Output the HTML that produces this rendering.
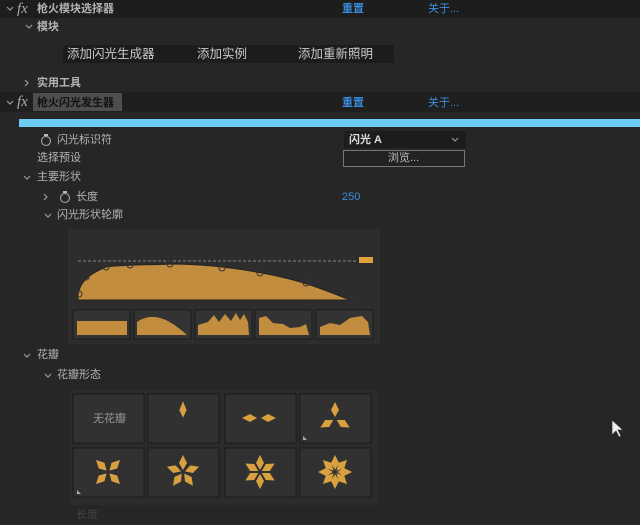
<!DOCTYPE html>
<html><head><meta charset="utf-8"><style>
*{margin:0;padding:0;box-sizing:border-box}
body{width:640px;height:525px;background:#262626;position:relative;overflow:hidden;font-family:"Liberation Sans","Noto Sans CJK SC",sans-serif;font-size:11px;color:#b4b4b4}
.a{position:absolute;white-space:nowrap;line-height:14px}
.b{font-weight:bold}
.blue{color:#3b8fe0}
svg{position:absolute;left:0;top:0}
</style></head><body>
<div class="a" style="left:0;top:0;width:640px;height:18px;background:#1d1d1d"></div>
<div class="a" style="left:0;top:92px;width:640px;height:20px;background:#1f1f1f"></div>
<div class="a" style="left:33px;top:93px;width:89px;height:18px;background:#4e4e4e"></div>
<div class="a" style="left:63px;top:45px;width:331px;height:18px;background:#1c1c1c"></div>
<div class="a" style="left:19px;top:119px;width:621px;height:8px;background:#6ccbf2"></div>
<div class="a" style="left:344px;top:131px;width:122px;height:17px;background:#1c1c1c"></div>
<div class="a" style="left:343px;top:150px;width:122px;height:17px;border:1px solid #777;background:#222"></div>
<div class="a" style="left:68px;top:229px;width:312px;height:115px;background:#2d2d2d"></div>
<div class="a" style="left:70px;top:390px;width:308px;height:115px;background:#2b2b2b"></div>

<svg width="640" height="525">
 <g fill="none" stroke="#999" stroke-width="1.2">
  <path d="M7,7l3,3l3,-3"/><path d="M26,25l3,3l3,-3"/><path d="M25,80l3,3l-3,3"/>
  <path d="M7,101l3,3l3,-3"/><path d="M24,176l3,3l3,-3"/><path d="M44,194l3,3l-3,3"/>
  <path d="M45,214l3,3l3,-3"/><path d="M24,354l3,3l3,-3"/><path d="M45,374l3,3l3,-3"/>
  <path d="M452,138l3,3l3,-3"/>
  <circle cx="46" cy="141" r="4.5"/><circle cx="65" cy="198" r="4.5"/>
 </g>
 <g fill="#bbb"><rect x="44" y="134" width="4" height="2"/><rect x="63" y="191" width="4" height="2"/></g>
 <line x1="78" y1="261" x2="356" y2="261" stroke="#888" stroke-dasharray="3,2"/>
 <rect x="359" y="257" width="14" height="6" fill="#e0a040"/>
 <path d="M78,300 L78,294 C80,285 84,276 106,267 C130,264 160,265 170,264 C200,264 230,267 262,273 C300,280 320,288 350,300 Z" fill="#c28d3e" stroke="#222" stroke-width="1"/>
 <g fill="none" stroke="#333"><circle cx="79" cy="294" r="3"/><circle cx="86" cy="277" r="3"/><circle cx="106" cy="267" r="3"/><circle cx="130" cy="265" r="3"/><circle cx="170" cy="264" r="3"/><circle cx="222" cy="268" r="3"/><circle cx="260" cy="273" r="3"/><circle cx="306" cy="283" r="3"/><circle cx="350" cy="300" r="3"/></g>
 <g fill="#333" stroke="#1b1b1b"><rect x="73" y="310" width="57" height="29"/><rect x="134" y="310" width="57" height="29"/><rect x="195" y="310" width="57" height="29"/><rect x="255" y="310" width="57" height="29"/><rect x="316" y="310" width="57" height="29"/></g>
 <g fill="#c28d3e">
  <rect x="77" y="321" width="50" height="14"/>
  <path d="M137,335 L137,322 C150,313 165,315 187,335Z"/>
  <path d="M198,335 L198,325 L208,322 L214,315 L219,322 L225,314 L231,321 L236,313 L240,320 L244,314 L248,322 L249,335Z"/>
  <path d="M259,335 L259,318 L266,316 L273,323 L283,324 L290,328 L300,327 L306,324 L309,335Z"/>
  <path d="M320,335 L320,327 L330,323 L340,325 L350,318 L362,316 L368,322 L370,335Z"/>
 </g>
 <g fill="#313131" stroke="#1a1a1a">
  <rect x="73" y="394" width="71" height="49"/><rect x="148" y="394" width="71" height="49"/><rect x="225" y="394" width="71" height="49"/><rect x="300" y="394" width="71" height="49"/>
  <rect x="73" y="448" width="71" height="49"/><rect x="148" y="448" width="71" height="49"/><rect x="225" y="448" width="71" height="49"/><rect x="300" y="448" width="71" height="49"/>
 </g>
 <defs><path id="p" d="M0,-2 L4,-9 L0,-17 L-4,-9Z" fill="#d9a040"/></defs>
 <use href="#p" transform="translate(183,420) scale(0.9,1.1)"/>
 <use href="#p" transform="translate(259,418) rotate(-90)"/>
 <use href="#p" transform="translate(259,418) rotate(90)"/>
 <g transform="translate(335,419)"><use href="#p"/><use href="#p" transform="rotate(120)"/><use href="#p" transform="rotate(240)"/></g>
 <g transform="translate(108,472)"><use href="#p" transform="rotate(45)"/><use href="#p" transform="rotate(135)"/><use href="#p" transform="rotate(225)"/><use href="#p" transform="rotate(315)"/></g>
 <g transform="translate(183,472)"><use href="#p"/><use href="#p" transform="rotate(72)"/><use href="#p" transform="rotate(144)"/><use href="#p" transform="rotate(216)"/><use href="#p" transform="rotate(288)"/></g>
 <g transform="translate(260,472)"><use href="#p"/><use href="#p" transform="rotate(60)"/><use href="#p" transform="rotate(120)"/><use href="#p" transform="rotate(180)"/><use href="#p" transform="rotate(240)"/><use href="#p" transform="rotate(300)"/></g>
 <g transform="translate(335,472)"><use href="#p"/><use href="#p" transform="rotate(45)"/><use href="#p" transform="rotate(90)"/><use href="#p" transform="rotate(135)"/><use href="#p" transform="rotate(180)"/><use href="#p" transform="rotate(225)"/><use href="#p" transform="rotate(270)"/><use href="#p" transform="rotate(315)"/></g>
 <g fill="#aaa"><path d="M303,440 l4,0 l-4,-4z"/><path d="M77,494 l4,0 l-4,-4z"/></g>
 <path d="M612,420 L612,435 L616,431 L619,437 L621,436 L618,430 L623,430Z" fill="#eee" stroke="#333" stroke-width="0.7"/>
</svg>

<div class="a" style="left:17px;top:1px;font:italic 15px 'Liberation Serif',serif;color:#aaa">fx</div>
<div class="a b" style="left:37px;top:2px">枪火模块选择器</div>
<div class="a b blue" style="left:342px;top:2px">重置</div>
<div class="a blue" style="left:428px;top:2px">关于...</div>
<div class="a b" style="left:37px;top:20px">模块</div>
<div class="a" style="left:67px;top:47px;font-size:12.5px;color:#c8c8c8">添加闪光生成器</div>
<div class="a" style="left:197px;top:47px;font-size:12.5px;color:#c8c8c8">添加实例</div>
<div class="a" style="left:298px;top:47px;font-size:12.5px;color:#c8c8c8">添加重新照明</div>
<div class="a b" style="left:37px;top:76px">实用工具</div>
<div class="a" style="left:17px;top:94px;font:italic 15px 'Liberation Serif',serif;color:#aaa">fx</div>
<div class="a b" style="left:37px;top:96px;color:#111">枪火闪光发生器</div>
<div class="a b blue" style="left:342px;top:96px">重置</div>
<div class="a blue" style="left:428px;top:96px">关于...</div>
<div class="a" style="left:57px;top:133px">闪光标识符</div>
<div class="a b" style="left:349px;top:133px;color:#ddd">闪光 A</div>
<div class="a" style="left:37px;top:151px">选择预设</div>
<div class="a" style="left:388px;top:151px;color:#bbb">浏览...</div>
<div class="a" style="left:37px;top:170px">主要形状</div>
<div class="a" style="left:76px;top:190px">长度</div>
<div class="a blue" style="left:342px;top:190px">250</div>
<div class="a" style="left:57px;top:208px">闪光形状轮廓</div>
<div class="a" style="left:37px;top:348px">花瓣</div>
<div class="a" style="left:57px;top:368px">花瓣形态</div>
<div class="a" style="left:93px;top:412px;color:#999">无花瓣</div>
<div class="a" style="left:76px;top:508px;color:#444">长度</div>
</body></html>
